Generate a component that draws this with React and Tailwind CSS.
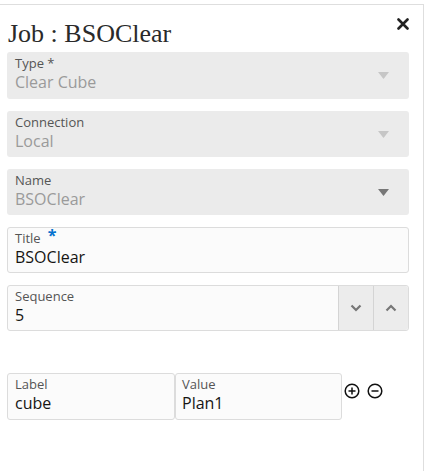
import React from "react";

const sans = { fontFamily: '"Open Sans", "Noto Sans", sans-serif' };

function Caret({ dark }) {
  return (
    <svg width="11" height="7" viewBox="0 0 11 7" className="shrink-0">
      <path d="M0 0 L11 0 L5.5 7 Z" fill={dark ? "#777777" : "#c6c6c6"} />
    </svg>
  );
}

function SelectField({ label, value, dark, h }) {
  return (
    <div className={`flex ${h} items-center rounded-[3px] bg-[#ebebeb] pl-[8px] pr-[20px]`}>
      <div className="flex flex-1 flex-col self-start pt-[3px]">
        <span className="text-[13px] leading-[17px] text-[#555555]">{label}</span>
        <span className="text-[16px] leading-[20px] text-[#9a9a9a]">{value}</span>
      </div>
      <Caret dark={dark} />
    </div>
  );
}

export default function App() {
  return (
    <div className="h-[471px] w-[433px] overflow-hidden bg-white" style={sans}>
      <div className="mt-[4px] h-[480px] w-[424px] border-t border-r border-[#dedede] pl-[7px] pr-[14px]">
        <div className="flex h-[47px] items-start justify-between">
          <h1
            className="pl-[1px] pt-[16px] text-[26px] leading-[26px] text-[#2a2a2a]"
            style={{ fontFamily: '"Liberation Serif", "DejaVu Serif", serif' }}
          >
            Job : BSOClear
          </h1>
          <svg width="12" height="12" viewBox="0 0 12 12" className="mr-0 mt-[13px]">
            <path d="M1.5 1.5 L10.5 10.5 M10.5 1.5 L1.5 10.5" stroke="#222" strokeWidth="2.6" strokeLinecap="round" />
          </svg>
        </div>
        <div className="flex flex-col gap-[12px]">
          <SelectField h="h-[47px]" label="Type *" value="Clear Cube" />
          <SelectField h="h-[46px]" label="Connection" value="Local" />
          <SelectField h="h-[46px]" label="Name" value="BSOClear" dark />
          <div className="flex h-[46px] flex-col rounded-[3px] border border-[#dcdcdc] bg-[#fbfbfb] pl-[7px] pt-[2px]">
            <span className="flex text-[13px] leading-[17px] text-[#555555]">
              Title
              <span className="ml-[7px] -mt-[3px] text-[16px] font-bold leading-[16px] text-[#0572ce]">*</span>
            </span>
            <span className="text-[16px] leading-[20px] text-[#161513]">BSOClear</span>
          </div>
          <div className="flex h-[46px] rounded-[3px] border border-[#dcdcdc] bg-[#fbfbfb]">
            <div className="flex flex-1 flex-col pl-[7px] pt-[2px]">
              <span className="text-[13px] leading-[17px] text-[#555555]">Sequence</span>
              <span className="text-[16px] leading-[20px] text-[#161513]">5</span>
            </div>
            <div className="flex w-[35px] items-center justify-center border-l border-[#d4d4d4] bg-[#ececec]">
              <svg width="12" height="8" viewBox="0 0 12 8">
                <path d="M1.5 1.5 L6 6 L10.5 1.5" fill="none" stroke="#777" strokeWidth="2.2" />
              </svg>
            </div>
            <div className="flex w-[35px] items-center justify-center rounded-r-[3px] border-l border-[#d4d4d4] bg-[#ececec]">
              <svg width="12" height="8" viewBox="0 0 12 8">
                <path d="M1.5 6.5 L6 2 L10.5 6.5" fill="none" stroke="#777" strokeWidth="2.2" />
              </svg>
            </div>
          </div>
        </div>
        <div className="mt-[42px] flex items-start">
          <div className="flex h-[47px] w-[168px] flex-col rounded-[3px] border border-[#dcdcdc] bg-[#fbfbfb] pl-[7px] pt-[2px]">
            <span className="text-[13px] leading-[17px] text-[#555555]">Label</span>
            <span className="text-[16px] leading-[20px] text-[#161513]">cube</span>
          </div>
          <div className="flex h-[47px] w-[167px] flex-col rounded-[3px] border border-[#dcdcdc] bg-[#fbfbfb] pl-[6px] pt-[2px]">
            <span className="text-[13px] leading-[17px] text-[#555555]">Value</span>
            <span className="text-[16px] leading-[20px] text-[#161513]">Plan1</span>
          </div>
          <div className="ml-[2px] mt-[10px] flex gap-[7px]">
            <svg width="16" height="16" viewBox="0 0 16 16">
              <circle cx="8" cy="8" r="6.8" fill="none" stroke="#111" strokeWidth="1.5" />
              <path d="M8 4.5 V11.5 M4.5 8 H11.5" stroke="#111" strokeWidth="1.5" />
            </svg>
            <svg width="16" height="16" viewBox="0 0 16 16">
              <circle cx="8" cy="8" r="6.8" fill="none" stroke="#111" strokeWidth="1.5" />
              <path d="M4.5 8 H11.5" stroke="#111" strokeWidth="1.5" />
            </svg>
          </div>
        </div>
      </div>
    </div>
  );
}
